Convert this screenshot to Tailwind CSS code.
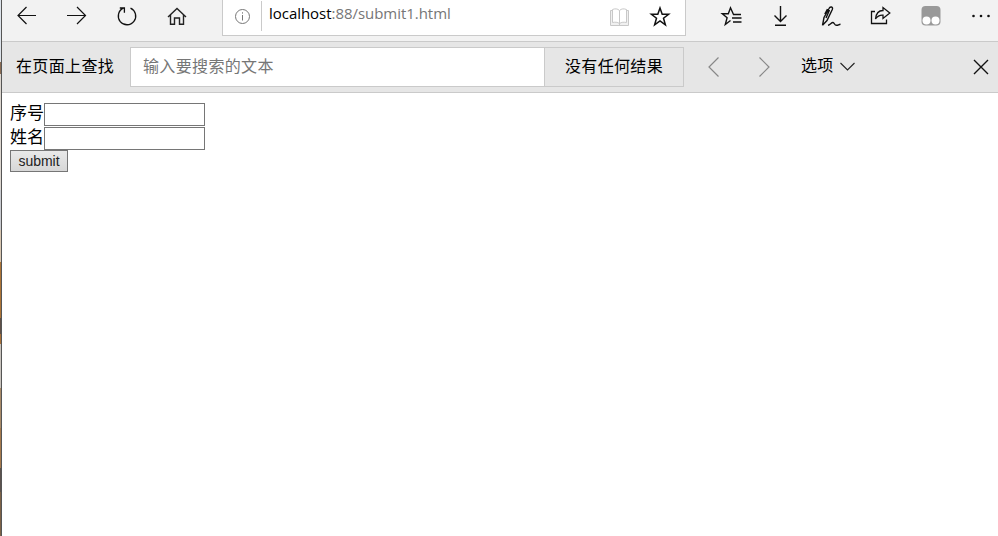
<!DOCTYPE html>
<html lang="zh">
<head>
<meta charset="utf-8">
<title>submit1</title>
<script src="https://cdn.jsdelivr.net/npm/@tailwindcss/browser@4"></script>
</head>
<body class="flex h-[536px] w-[998px] overflow-hidden bg-white font-['Liberation_Sans','Noto_Sans_CJK_SC',sans-serif] text-black">
  <div class="flex w-px shrink-0 flex-col">
    <div class="h-[62px] bg-[#dde3ea]"></div>
    <div class="h-[12px] bg-[#8a6b52]"></div>
    <div class="h-[116px] bg-[#dcd6cf]"></div>
    <div class="h-[40px] bg-[#c9cbd0]"></div>
    <div class="h-[32px] bg-[#d8c6b0]"></div>
    <div class="h-[56px] bg-[#ad7436]"></div>
    <div class="h-[16px] bg-[#5f5048]"></div>
    <div class="h-[10px] bg-[#a87038]"></div>
    <div class="h-[44px] bg-[#c9c4be]"></div>
    <div class="h-[40px] bg-[#a88a68]"></div>
    <div class="h-[40px] bg-[#a5794c]"></div>
    <div class="h-[24px] bg-[#5c534e]"></div>
    <div class="grow bg-[#7d6246]"></div>
  </div>
  <div class="w-px shrink-0 bg-[#555555]"></div>
  <div class="flex w-[996px] flex-col">
    <header class="flex h-[42px] shrink-0 overflow-hidden border-b border-[#cacaca] bg-[#f2f2f2]">
      <nav class="mr-5 flex shrink-0">
        <svg class="h-9 w-[50px]" viewBox="0 0 50 36" fill="none" stroke="#111" stroke-width="1.2"><path d="M34 15.5H16M24.5 7 16 15.5 24.5 24"/></svg>
        <svg class="h-9 w-[50px]" viewBox="0 0 50 36" fill="none" stroke="#111" stroke-width="1.2"><path d="M15 15.5H33.500M25 7 33.500 15.500 25 24"/></svg>
        <svg class="h-9 w-[50px]" viewBox="0 0 50 36" fill="none" stroke="#111" stroke-width="1.3"><path d="M28.500 8.100A8.700 8.700 0 1 1 21.300 8.200M17.800 8H22.400V12.700"/></svg>
        <svg class="h-9 w-[50px]" viewBox="0 0 50 36" fill="none" stroke="#222" stroke-width="1.4"><path d="M16 17 25 8.500 34 17M18.500 15V24.300H22.500V18H27.500V24.300H31.500V15"/></svg>
      </nav>
      <div class="flex h-9 w-[464px] shrink-0 border-x border-b border-[#cacaca] bg-white">
        <svg class="h-[35px] w-[38px]" viewBox="0 0 38 35" fill="none" stroke="#777" stroke-width="1"><circle cx="19.500" cy="16.500" r="7"/><path d="M19.500 15V20.500M19.500 12.300V13.600"/></svg>
        <div class="mt-px h-[30px] w-px bg-[#cacaca]"></div>
        <div class="ml-[7px] h-7 w-[329px] whitespace-nowrap font-['Open_Sans','Noto_Sans',sans-serif] text-[15px] leading-[26px] tracking-[-0.04px] text-[#767676]"><span class="text-black">localhost</span>:88/submit1.html</div>
        <svg class="ml-[2px] h-[35px] w-[40px]" viewBox="0 0 40 35" fill="none" stroke="#c8c8c8" stroke-width="1"><path fill="#f0f0f0" d="M12.500 10.500H10.500V25.500H28.500V10.500H26.500"/><path fill="#fff" d="M19.500 10.500C17.500 8.500 15 8.500 12.500 9.500V22.500C15 22 17.500 22 19.500 23.500C21.500 22 24 22 26.500 22.500V9.500C24 8.500 21.500 8.500 19.500 10.500V25.500"/></svg>
        <svg class="h-[35px] w-[40px]" viewBox="0 0 40 35" fill="none" stroke="#111" stroke-width="1.500"><path d="m20 8 2.200 6.300H28.600L23.500 18.200 25.400 24.800 20 20.900 14.600 24.800 16.500 18.200 11.400 14.300H17.800Z"/></svg>
      </div>
      <nav class="ml-5 flex shrink-0">
        <svg class="h-9 w-[50px]" viewBox="0 0 50 36" fill="none" stroke="#111" stroke-width="1.400"><path d="M35 14.500H27M27.500 14.500 24.500 7.800 22.300 13.800H16.300L21.100 17.700 19.300 24.500 24.500 20.500M26 18H35.500M27 22H35.500"/></svg>
        <svg class="h-9 w-[50px]" viewBox="0 0 50 36" fill="none" stroke="#111" stroke-width="1.400"><path d="M24.500 6V21.500M18.500 15.500 24.500 21.500 30.500 15.500M19 25.300H30"/></svg>
        <svg class="h-9 w-[50px]" viewBox="0 0 50 36" fill="none" stroke="#111" stroke-width="1.400"><path d="M16.500 25.300 18 17.500 23 8.500C24 6.300 27.500 6.500 26.300 9.500L21 20.500 16.500 25.300M21.500 9 18.800 14M23.500 10 20 18M22 25.300C24 25 25.500 22.300 27 22.500S28.300 25.300 30.500 25.300C32.500 25.300 32.500 24.500 34.500 24.300"/></svg>
        <svg class="h-9 w-[50px]" viewBox="0 0 50 36" fill="none" stroke="#111" stroke-width="1.300"><path d="M19 11.500H15.500V23.500H30.500V19.500M19.500 19C20 14 22.500 10.500 27 10.500V7.500L33.800 13 27 18.500V15.200C24 15 21.500 16 19.500 19Z"/></svg>
        <svg class="h-9 w-[50px]" viewBox="0 0 50 36"><rect x="15.500" y="6" width="19" height="19.500" rx="4" fill="#999"/><circle cx="20.500" cy="20.500" r="4" fill="#fff"/><circle cx="29.500" cy="20.500" r="4" fill="#fff"/></svg>
        <svg class="h-9 w-[50px]" viewBox="0 0 50 36" fill="#111"><circle cx="17.500" cy="16" r="1.300"/><circle cx="25" cy="16" r="1.300"/><circle cx="32.500" cy="16" r="1.300"/></svg>
      </nav>
    </header>
    <section class="flex h-[51px] shrink-0 items-center border-b border-[#cacaca] bg-[#e6e6e6] text-[16px] tracking-[0.35px]">
      <div class="w-[128px] shrink-0 whitespace-nowrap pl-[14px]">在页面上查找</div>
      <div class="flex h-10 w-[554px] shrink-0 items-center border border-[#cacaca] bg-white">
        <div class="w-[413px] pl-3 text-[#767676]">输入要搜索的文本</div>
        <div class="flex h-full grow items-center justify-center border-l border-[#cacaca] bg-[#e6e6e6]">没有任何结果</div>
      </div>
      <svg class="ml-1 h-10 w-[50px]" viewBox="0 0 50 40" fill="none" stroke="#888" stroke-width="1.200"><path d="M30.500 10.500 21 20 30.500 29.500"/></svg>
      <svg class="h-10 w-[50px]" viewBox="0 0 50 40" fill="none" stroke="#888" stroke-width="1.200"><path d="M21.500 10.500 31 20 21.500 29.500"/></svg>
      <div class="ml-[13px] w-[37px] whitespace-nowrap pb-0.5">选项</div>
      <svg class="h-10 w-5" viewBox="0 0 20 40" fill="none" stroke="#222" stroke-width="1.100"><path d="M2.500 16 9.500 23 16.500 16"/></svg>
      <svg class="ml-auto mr-[2px] h-10 w-[30px]" viewBox="0 0 30 40" fill="none" stroke="#111" stroke-width="1.400"><path d="M8 13 22 27M22 13 8 27"/></svg>
    </section>
    <main class="pl-2 pt-[10px] text-[17px]">
      <div class="flex h-6 items-start leading-[22px]"><span class="w-[34px]">序号</span><input class="h-[23px] w-[161px] border border-[#767676] bg-white"></div>
      <div class="flex h-[23px] items-start leading-[22px]"><span class="w-[34px]">姓名</span><input class="h-[23px] w-[161px] border border-[#767676] bg-white"></div>
      <button class="block h-[22px] w-[58px] border border-[#767676] bg-linear-to-b from-[#e9e9e9] to-[#d7d7d7] text-[14px] leading-[20px] text-[#222]">submit</button>
    </main>
  </div>
</body>
</html>
